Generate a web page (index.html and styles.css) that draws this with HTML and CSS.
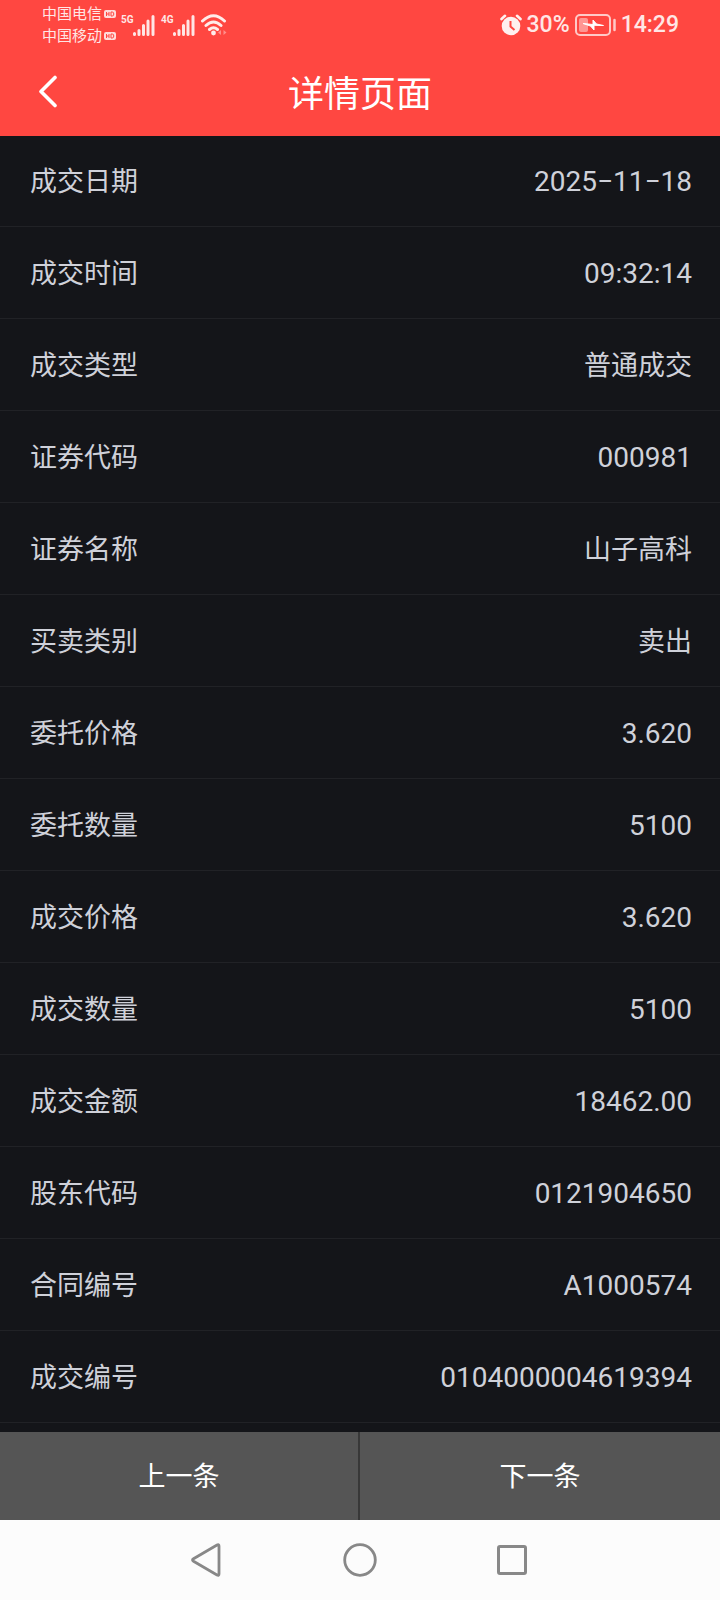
FILE: index.html
```html
<!DOCTYPE html>
<html lang="zh-CN">
<head>
<meta charset="utf-8">
<meta name="viewport" content="width=device-width, initial-scale=1">
<title>详情页面</title>
<link rel="stylesheet" href="styles.css">
</head>
<body>
<div class="screen">
  <header class="top">
    <div class="status">
      <div class="carriers">
        <div class="carrier"><span>中国电信</span><svg class="hd" viewBox="0 0 12 8"><rect width="12" height="8" rx="2" fill="#ffdcda"/><path d="M2.5 2v4M5 2v4M2.5 4H5M7 2v4h1.2q1.6 0 1.6-2t-1.6-2z" fill="none" stroke="#ff4741"/></svg></div>
        <div class="carrier"><span>中国移动</span><svg class="hd" viewBox="0 0 12 8"><rect width="12" height="8" rx="2" fill="#ffdcda"/><path d="M2.5 2v4M5 2v4M2.5 4H5M7 2v4h1.2q1.6 0 1.6-2t-1.6-2z" fill="none" stroke="#ff4741"/></svg></div>
      </div>
      <div class="signals">
        <div class="signal"><span class="net">5G</span><svg class="bars" viewBox="0 0 22 21"><path d="M1.5 18.5v1M6 15.5v4M10.5 10.5v9M15 6v13.5M20 1.5v18" fill="none" stroke="#ffe6e5" stroke-width="3" stroke-linecap="round"/></svg></div>
        <div class="signal"><span class="net">4G</span><svg class="bars" viewBox="0 0 22 21"><path d="M1.5 18.5v1M6 15.5v4M10.5 10.5v9M15 6v13.5M20 1.5v18" fill="none" stroke="#ffe6e5" stroke-width="3" stroke-linecap="round"/></svg></div>
        <svg class="wifi" viewBox="0 0 26 22"><path d="M1.5 7Q12.5-3.500 23.500 7M5 11.500Q12.500 4.500 20 11.500M8.500 15.500Q12.500 12 16.500 15.500" fill="none" stroke="#ffecea" stroke-width="3" stroke-linecap="round"/><circle cx="12.500" cy="19" r="2.400" fill="#ffecea"/><path d="M17 18.500l3-2.500v5zM25.500 18.500l-3-2.500v5z" fill="#ff8f8b"/></svg>
      </div>
      <div class="system">
        <svg class="alarm" viewBox="0 0 22 22"><path d="M1.500 5L5 1.800M20.500 5L17 1.800" stroke="#fff0ef" stroke-width="2.600" stroke-linecap="round"/><circle cx="11" cy="12" r="9.300" fill="#fff0ef"/><path d="M10.500 7v5.500l4 3.500" fill="none" stroke="#ff4741" stroke-width="2"/></svg>
        <span>30%</span>
        <svg class="battery" viewBox="0 0 41 22"><rect x="1" y="1" width="34" height="20" rx="4" fill="none" stroke="#ffc9c7" stroke-width="2"/><rect x="4" y="4" width="9" height="14" rx="2" fill="#ff9693"/><path d="M8 9.500l10 1V6l3.500 4 7 1.500-9.500-.200V16l-3.500-4z" fill="#fff" stroke="#fff"/><path d="M39.500 6v10" stroke="#ffc9c7" stroke-width="2.500" stroke-linecap="round"/></svg>
        <time>14:29</time>
      </div>
    </div>
    <div class="titlebar">
      <button class="back" type="button" aria-label="返回"><svg viewBox="0 0 20 34"><path d="M17 2.500L3 16.500l14 14" fill="none" stroke="#fff" stroke-width="3.600" stroke-linecap="round" stroke-linejoin="round"/></svg></button>
      <h1 class="title">详情页面</h1>
    </div>
  </header>
  <main class="main">
    <dl class="details">
      <div class="row"><dt>成交日期</dt><dd class="figure">2025−11−18</dd></div>
      <div class="row"><dt>成交时间</dt><dd class="figure">09:32:14</dd></div>
      <div class="row"><dt>成交类型</dt><dd>普通成交</dd></div>
      <div class="row"><dt>证券代码</dt><dd class="figure">000981</dd></div>
      <div class="row"><dt>证券名称</dt><dd>山子高科</dd></div>
      <div class="row"><dt>买卖类别</dt><dd>卖出</dd></div>
      <div class="row"><dt>委托价格</dt><dd class="figure">3.620</dd></div>
      <div class="row"><dt>委托数量</dt><dd class="figure">5100</dd></div>
      <div class="row"><dt>成交价格</dt><dd class="figure">3.620</dd></div>
      <div class="row"><dt>成交数量</dt><dd class="figure">5100</dd></div>
      <div class="row"><dt>成交金额</dt><dd class="figure">18462.00</dd></div>
      <div class="row"><dt>股东代码</dt><dd class="figure">0121904650</dd></div>
      <div class="row"><dt>合同编号</dt><dd class="figure">A1000574</dd></div>
      <div class="row"><dt>成交编号</dt><dd class="figure">0104000004619394</dd></div>
    </dl>
  </main>
  <div class="pager">
    <button type="button">上一条</button>
    <button type="button">下一条</button>
  </div>
  <nav class="sysnav" aria-label="系统导航">
    <button type="button" aria-label="返回"><svg viewBox="0 0 36 36"><path d="M28 3Q30 2 30 4v28q0 2-2 1L4.500 19.200Q2.500 18 4.500 16.800z" fill="none" stroke="#888" stroke-width="2.800"/></svg></button>
    <button type="button" aria-label="主屏幕"><svg viewBox="0 0 36 36"><circle cx="18" cy="18" r="15.300" fill="none" stroke="#888" stroke-width="2.800"/></svg></button>
    <button type="button" aria-label="最近任务"><svg viewBox="0 0 36 36"><rect x="3.500" y="4.500" width="27" height="27" rx="1.500" fill="none" stroke="#888" stroke-width="3"/></svg></button>
  </nav>
</div>
</body>
</html>
```
FILE: styles.css
```css
* {
  box-sizing: border-box;
}

body {
  margin: 0;
  background: #141519;
  font-family: Roboto, "Noto Sans CJK SC", sans-serif;
}

button {
  margin: 0;
  padding: 0;
  border: 0;
  background: none;
  color: inherit;
  font: inherit;
}

svg {
  display: block;
  flex: none;
}

.screen {
  display: flex;
  flex-direction: column;
  min-height: 100vh;
}

.top {
  background: #ff4741;
  color: #fff;
}

.status {
  display: flex;
  align-items: center;
  height: 50px;
  padding: 0 41px 0 42px;
  color: #ffe6e5;
}

.carrier {
  display: flex;
  align-items: center;
  gap: 2px;
  font-size: 15px;
  line-height: 22px;
}

.hd {
  width: 12px;
  height: 8px;
}

.signals {
  display: flex;
  align-items: center;
  gap: 6px;
  margin-left: 5px;
}

.signal {
  display: flex;
  align-items: flex-start;
}

.net {
  width: 12px;
  font-size: 10px;
  font-weight: 700;
  line-height: 10px;
}

.bars {
  width: 22px;
  height: 21px;
}

.wifi {
  width: 26px;
  height: 22px;
}

.system {
  display: flex;
  align-items: center;
  gap: 5px;
  margin-left: auto;
  font-size: 23px;
  font-weight: 500;
  line-height: 26px;
}

.alarm {
  width: 22px;
  height: 22px;
}

.battery {
  width: 41px;
  height: 22px;
}

.titlebar {
  display: grid;
  grid-template-columns: 96px 1fr 96px;
  align-items: center;
  height: 86px;
}

.back {
  display: flex;
  padding: 0 0 2px 38px;
}

.back svg {
  width: 20px;
  height: 34px;
}

.title {
  margin: 0;
  padding-top: 4px;
  font-size: 36px;
  font-weight: 400;
  line-height: 48px;
  text-align: center;
}

.main {
  flex: 1;
  padding-bottom: 9px;
}

.details {
  margin: 0;
  color: #cfd1d9;
}

.row {
  display: flex;
  align-items: center;
  justify-content: space-between;
  min-height: 92px;
  padding: 2px 28px 0 30px;
  border-bottom: 1px solid #212226;
  font-size: 27px;
  line-height: 40px;
}

.row:first-child {
  min-height: 91px;
}

.row dd {
  margin: 0;
  text-align: right;
}

.row .figure {
  font-size: 28px;
}

.pager {
  display: grid;
  grid-template-columns: 1fr 1fr;
  height: 88px;
  background: #555;
  color: #fff;
  font-size: 27px;
}

.pager button {
  padding-bottom: 4px;
}

.pager button:first-child {
  border-right: 2px solid #383838;
}

.sysnav {
  display: flex;
  align-items: center;
  justify-content: center;
  gap: 105px;
  height: 80px;
  background: #fcfcfc;
}

.sysnav button {
  display: flex;
  justify-content: center;
  width: 48px;
}

.sysnav svg {
  width: 36px;
  height: 36px;
}
```
